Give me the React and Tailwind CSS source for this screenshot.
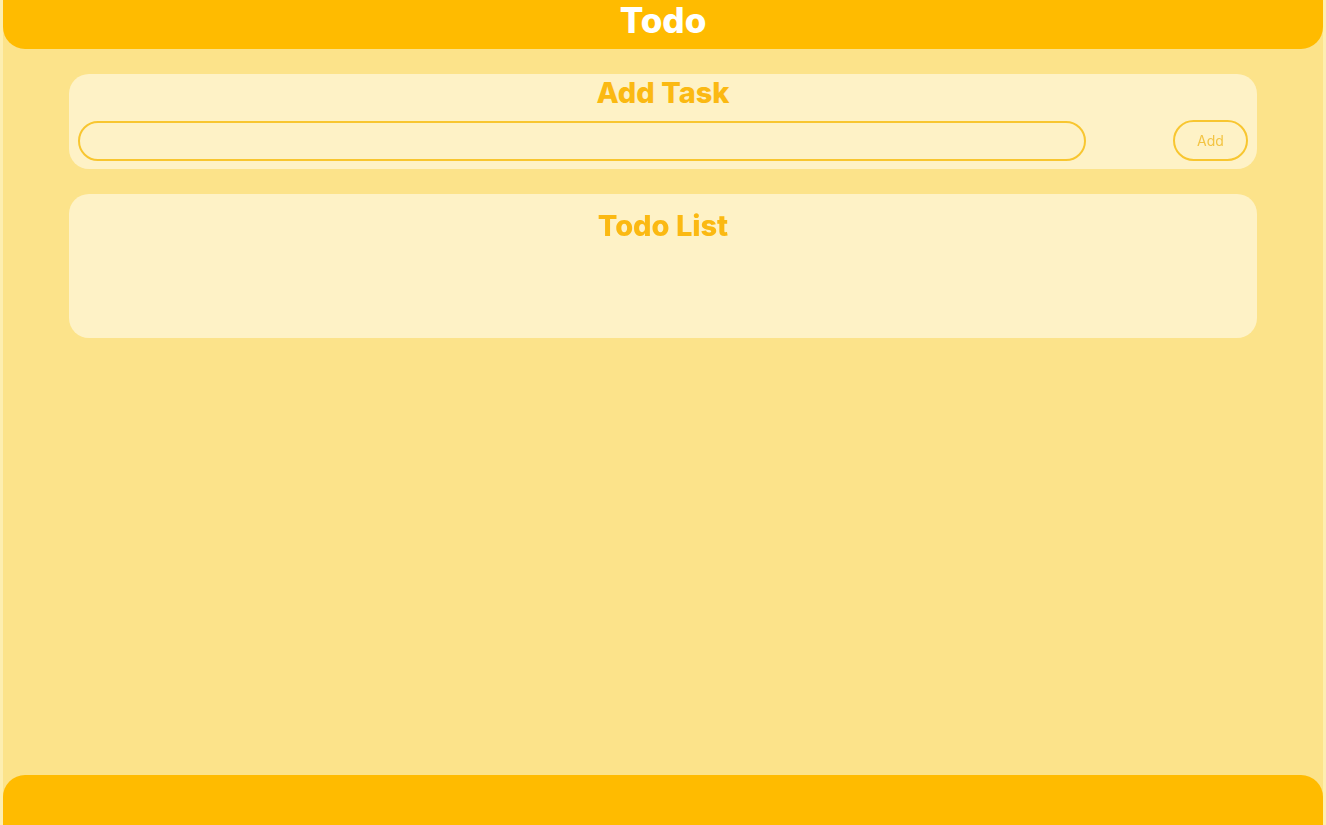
import React, { useState } from "react";

const App = () => {
  const [task, setTask] = useState("");
  const [todos, setTodos] = useState([]);

  const handleAdd = () => {
    if (!task.trim()) return;
    setTodos([...todos, task.trim()]);
    setTask("");
  };

  return (
    <div className="min-h-screen bg-[#fdeeb0] px-[3px] font-['Inter','Liberation_Sans',sans-serif]">
      <div className="min-h-screen flex flex-col bg-[#fce38a]">
        <header className="h-[49px] bg-[#ffbb00] rounded-b-[22px] flex justify-center">
          <h1 className="text-[35px] leading-[40px] font-extrabold text-white">Todo</h1>
        </header>

        <main className="flex-1 px-[66px] pt-[25px] flex flex-col gap-[25px]">
          <section className="bg-[#fef2c6] rounded-[20px] px-[9px] pb-[8px]">
            <h2 className="text-center text-[29px] leading-[38px] font-extrabold text-[#fbb912]">Add Task</h2>
            <div className="flex items-center justify-between mt-[8px]">
              <input
                autoFocus
                type="text"
                value={task}
                onChange={(e) => setTask(e.target.value)}
                className="w-[1008px] h-[40px] rounded-full border-2 border-[#f8c630] bg-transparent px-[10px] outline-none text-[#b45309]"
              />
              <button
                onClick={handleAdd}
                className="w-[75px] h-[41px] rounded-full border-2 border-[#f8c630] text-[14px] text-[#f3c443]"
              >
                Add
              </button>
            </div>
          </section>

          <section className="bg-[#fef2c6] rounded-[20px] h-[144px] pt-[13px]">
            <h2 className="text-center text-[29px] leading-[38px] font-extrabold text-[#fbb912]">Todo List</h2>
            <ul>
              {todos.map((t, i) => (
                <li key={i} className="px-4 text-[#b45309]">{t}</li>
              ))}
            </ul>
          </section>
        </main>

        <footer className="h-[50px] bg-[#ffbb00] rounded-t-[22px]"></footer>
      </div>
    </div>
  );
};

export default App;
